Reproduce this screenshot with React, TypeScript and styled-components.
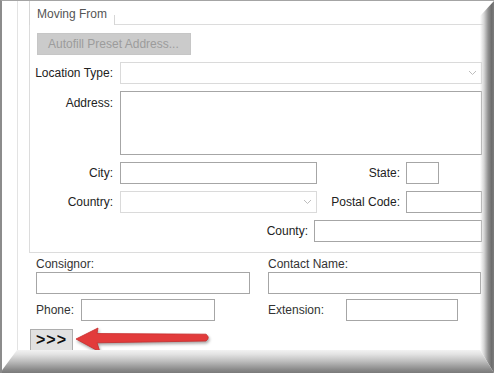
import React from "react";
import styled, { createGlobalStyle } from "styled-components";

const GlobalStyle = createGlobalStyle`
	html, body {
		margin: 0;
		padding: 0;
		background: #ffffff;
	}
	body {
		font-family: "Liberation Sans", Arial, sans-serif;
		font-size: 12px;
		color: #222222;
	}
`;

// picture frame with the bevelled shadow on the right and bottom edges
const Frame = styled.div`
	position: relative;
	box-sizing: border-box;
	width: 494px;
	height: 373px;
	overflow: hidden;
	display: flex;
	flex-direction: column;
	background: #ffffff;
	border-left: 2px solid #8c8c8c;
	border-top: 1px solid #a4a4a4;

	&::before {
		content: "";
		position: absolute;
		top: 0;
		right: 0;
		bottom: 0;
		width: 14px;
		pointer-events: none;
		background: linear-gradient(
			to right,
			rgba(240, 240, 240, 0),
			#d6d6d6 28%,
			#909090 58%,
			#6e6e6e 82%,
			#7c7c7c
		);
		clip-path: polygon(0 15px, 100% 0, 100% 100%, 0 calc(100% - 23px));
	}

	&::after {
		content: "";
		position: absolute;
		left: -2px;
		right: 0;
		bottom: 0;
		height: 23px;
		pointer-events: none;
		background: linear-gradient(
			to bottom,
			#f2f2f2,
			#e4e4e4 18%,
			#bcbcbc 50%,
			#8a8a8a 85%,
			#7a7a7a
		);
		clip-path: polygon(17px 0, calc(100% - 14px) 0, 100% 100%, 0 100%);
	}
`;

const Panel = styled.div`
	flex: 1;
	display: flex;
	flex-direction: column;
	margin-left: 15px;
	padding-left: 11px;
	border-left: 1px solid #e3e3e3;
`;

const Group = styled.div`
	display: flex;
	flex-direction: column;
	margin-right: 8px;
`;

const TabRow = styled.div`
	display: flex;
	height: 24px;
`;

const Tab = styled.div`
	box-sizing: border-box;
	width: 86px;
	padding: 6px 0 0 7px;
	line-height: 14px;
	color: #555555;
	border-left: 1px solid #d6d6d6;
	background: linear-gradient(#d6d6d6, #d6d6d6) right bottom / 1px 10px no-repeat;
`;

const TabFill = styled.div`
	flex: 1;
	border-bottom: 1px solid #dcdcdc;
`;

const GroupBody = styled.div`
	display: grid;
	grid-template-columns: 83px 1fr;
	column-gap: 7px;
	row-gap: 7px;
	padding: 8px 3px 10px 0;
	border: 1px solid #dcdcdc;
	border-top: none;
`;

const PresetButton = styled.button`
	grid-column: 1 / -1;
	justify-self: start;
	box-sizing: border-box;
	width: 154px;
	height: 22px;
	margin-left: 7px;
	padding: 0 0 0 10px;
	text-align: left;
	font-family: inherit;
	font-size: 12px;
	color: #9c9c9c;
	background: #cbcbcb;
	border: 1px solid #c6c6c6;
`;

const Label = styled.span<{ $top?: boolean; $width?: number }>`
	text-align: right;
	line-height: 14px;
	color: #222222;
	white-space: nowrap;
	align-self: ${ (p) => (p.$top ? "start" : "center") };
	padding-top: ${ (p) => (p.$top ? "5px" : "0") };
	${ (p) => (p.$width ? `width: ${ p.$width }px; flex: none;` : "") }
`;

const TextBox = styled.div<{ $width?: number; $height?: number; $light?: boolean }>`
	box-sizing: border-box;
	height: ${ (p) => p.$height ?? 22 }px;
	${ (p) => (p.$width ? `width: ${ p.$width }px; flex: none;` : "flex: 1; min-width: 0;") }
	background: #ffffff;
	border: 1px solid ${ (p) => (p.$light ? "#d9d9d9" : "#a6a6a6") };
`;

const SelectBox = styled.div<{ $width?: number }>`
	box-sizing: border-box;
	height: 22px;
	${ (p) => (p.$width ? `width: ${ p.$width }px; flex: none;` : "flex: 1;") }
	display: flex;
	align-items: center;
	justify-content: flex-end;
	padding-right: 4px;
	background: #ffffff;
	border: 1px solid #dadada;
`;

const FieldLine = styled.div<{ $end?: boolean }>`
	display: flex;
	align-items: center;
	gap: 6px;
	justify-content: ${ (p) => (p.$end ? "flex-end" : "flex-start") };
`;

const Spacer = styled.div`
	flex: 1;
`;

const Lower = styled.div`
	display: grid;
	grid-template-columns: 214px 213px;
	column-gap: 18px;
	margin-top: 4px;
	padding-left: 7px;
`;

const Column = styled.div`
	display: flex;
	flex-direction: column;
	align-items: flex-start;
`;

const Caption = styled.span`
	line-height: 14px;
	color: #333333;
	margin-bottom: 1px;
`;

const InlineField = styled.div<{ $labelWidth: number }>`
	display: flex;
	align-items: center;
	margin-top: 5px;

	& > span {
		width: ${ (p) => p.$labelWidth }px;
		flex: none;
		color: #333333;
	}
`;

const ActionRow = styled.div`
	display: flex;
	align-items: center;
	margin-top: 5px;
	padding-left: 1px;
`;

const NextButton = styled.button`
	box-sizing: border-box;
	width: 43px;
	height: 23px;
	padding: 0 0 1px;
	font-family: inherit;
	font-size: 16px;
	font-weight: bold;
	letter-spacing: 1px;
	color: #111111;
	background: #e1e1e1;
	border: 1px solid #adadad;
`;

const Arrow = styled.svg`
	margin-left: 2px;
	filter: drop-shadow(1px 2px 1.5px rgba(0, 0, 0, 0.35));
`;

const Chevron = () => (
	<svg width="9" height="6" viewBox="0 0 9 6">
		<polyline points="1,1 4.5,4.5 8,1" fill="none" stroke="#bdbdbd" strokeWidth="1" />
	</svg>
);

const App = () => {
	return (
		<>
			<GlobalStyle />
			<Frame>
				<Panel>
					<Group>
						<TabRow>
							<Tab>{ "Moving From" }</Tab>
							<TabFill />
						</TabRow>
						<GroupBody>
							<PresetButton>{ "Autofill Preset Address..." }</PresetButton>

							<Label>{ "Location Type:" }</Label>
							<FieldLine>
								<SelectBox>
									<Chevron />
								</SelectBox>
							</FieldLine>

							<Label $top>{ "Address:" }</Label>
							<FieldLine>
								<TextBox $height={ 64 } />
							</FieldLine>

							<Label>{ "City:" }</Label>
							<FieldLine>
								<TextBox $width={ 197 } />
								<Label $width={ 77 }>{ "State:" }</Label>
								<TextBox $width={ 33 } />
								<Spacer />
							</FieldLine>

							<Label>{ "Country:" }</Label>
							<FieldLine>
								<SelectBox $width={ 197 }>
									<Chevron />
								</SelectBox>
								<Label $width={ 77 }>{ "Postal Code:" }</Label>
								<TextBox />
							</FieldLine>

							<span />
							<FieldLine $end>
								<Label>{ "County:" }</Label>
								<TextBox $width={ 168 } />
							</FieldLine>
						</GroupBody>
					</Group>

					<Lower>
						<Column>
							<Caption>{ "Consignor:" }</Caption>
							<TextBox $width={ 214 } />
							<InlineField $labelWidth={ 45 }>
								<span>{ "Phone:" }</span>
								<TextBox $width={ 134 } />
							</InlineField>
						</Column>
						<Column>
							<Caption>{ "Contact Name:" }</Caption>
							<TextBox $width={ 213 } />
							<InlineField $labelWidth={ 78 }>
								<span>{ "Extension:" }</span>
								<TextBox $width={ 112 } />
							</InlineField>
						</Column>
					</Lower>

					<ActionRow>
						<NextButton>{ ">>>" }</NextButton>
						<Arrow width="136" height="28" viewBox="0 0 136 28">
							<path
								d="M1 13 L23 2 L22 7.5 L131 8.2 Q135.5 11.5 131 15 L22 16.8 L25 26 Z"
								fill="#e23b3b"
								stroke="#c62c2c"
								strokeWidth="0.8"
								strokeLinejoin="round"
							/>
						</Arrow>
					</ActionRow>
				</Panel>
			</Frame>
		</>
	);
};

export default App;
